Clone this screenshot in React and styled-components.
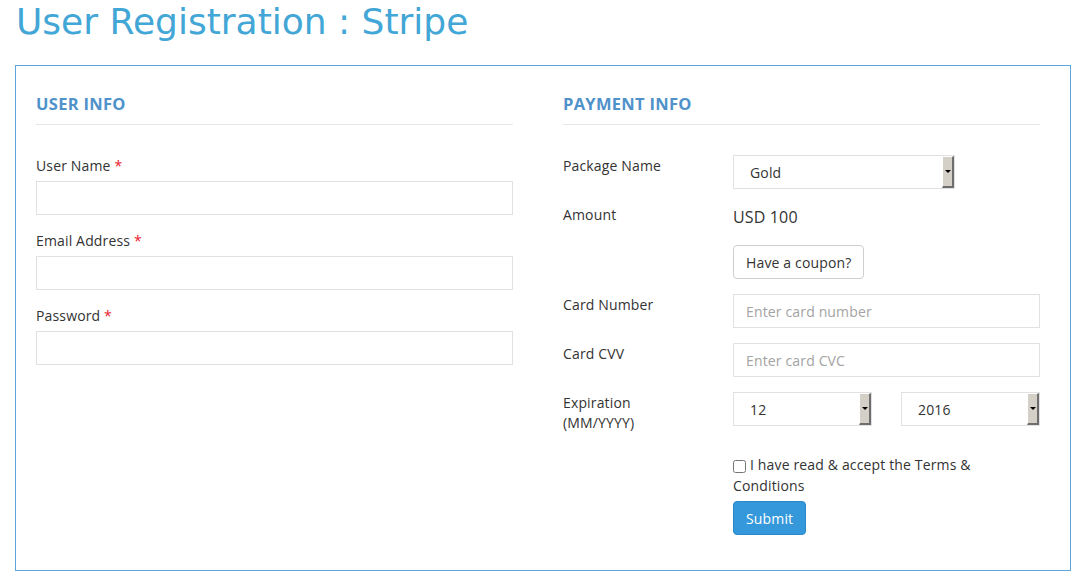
import React from 'react';
import styled, { createGlobalStyle } from 'styled-components';

const GlobalStyle = createGlobalStyle`
    body {
        margin: 0;
        background: #fff;
        font-family: "Open Sans", "Liberation Sans", sans-serif;
        font-size: 14px;
        letter-spacing: 0.15px;
        color: #333;
    }
`;

const Page = styled.div`
    padding: 0 12px 0 15px;
`;

const Title = styled.h1`
    margin: 0;
    height: 65px;
    padding-left: 1px;
    font-family: "DejaVu Sans", "Liberation Sans", sans-serif;
    font-weight: 400;
    font-size: 36px;
    line-height: 44px;
    letter-spacing: 0;
    color: #42a6d6;
`;

const Box = styled.div`
    border: 1px solid #5ba7dd;
    display: grid;
    grid-template-columns: 1fr 1fr;
    column-gap: 50px;
    padding: 27px 30px 35px 20px;
`;

const Column = styled.div`
    display: flex;
    flex-direction: column;
`;

const Heading = styled.h3`
    margin: 0;
    padding-bottom: 9px;
    border-bottom: 1px solid #e6e6e6;
    font-size: 16.5px;
    line-height: 22px;
    font-weight: 700;
    color: #4f92ca;
    letter-spacing: 0.3px;
`;

const Field = styled.div`
    display: flex;
    flex-direction: column;
    gap: 5px;
    margin-top: ${p => (p.first ? '31px' : '16px')};
`;

const Label = styled.label`
    line-height: 20px;
    color: #333;
`;

const Required = styled.span`
    color: #e8202a;
`;

const Input = styled.input`
    box-sizing: border-box;
    width: 100%;
    height: 34px;
    border: 1px solid #e1e1e1;
    border-radius: 0;
    padding: 0 12px;
    font-family: inherit;
    font-size: 14px;
    letter-spacing: inherit;
    color: #333;
    outline: none;
    &::placeholder {
        color: #a3a3a3;
    }
`;

const Row = styled.div`
    display: grid;
    grid-template-columns: 170px 1fr;
    margin-top: ${p => p.gap || '15px'};
`;

const RowLabel = styled.div`
    padding-top: 1px;
    line-height: 20px;
`;

const Control = styled.div`
    display: flex;
    flex-direction: column;
    align-items: ${p => (p.stretch ? 'stretch' : 'flex-start')};
`;

const SelectBox = styled.div`
    position: relative;
    box-sizing: border-box;
    width: ${p => p.width || '100%'};
    height: 34px;
    border: 1px solid #e1e1e1;
    display: flex;
    align-items: center;
    padding-left: 16px;
    font-size: 14px;
    color: #333;
    background: #fff;
`;

const SelectArrow = styled.span`
    position: absolute;
    top: 0;
    right: 0;
    bottom: 0;
    width: 12px;
    box-sizing: border-box;
    background: #d4d0c8;
    border-top: 1px solid #fff;
    border-left: 1px solid #fff;
    border-right: 2px solid #6e6e6e;
    border-bottom: 2px solid #6e6e6e;
    display: flex;
    align-items: center;
    justify-content: center;
    &::after {
        content: '';
        border-left: 3px solid transparent;
        border-right: 3px solid transparent;
        border-top: 3px solid #000;
    }
`;

const Amount = styled.div`
    font-size: 16px;
    line-height: 26px;
    color: #333;
`;

const Button = styled.button`
    box-sizing: border-box;
    height: 34px;
    padding: 0 12px;
    border-radius: 4px;
    font-family: inherit;
    font-size: 14px;
    letter-spacing: inherit;
    cursor: pointer;
    border: 1px solid ${p => (p.primary ? '#2a88c9' : '#cfcfcf')};
    background: ${p => (p.primary ? '#3498db' : '#fff')};
    color: ${p => (p.primary ? '#fff' : '#333')};
    margin-top: ${p => (p.primary ? '5px' : '0')};
`;

const ExpiryGrid = styled.div`
    display: grid;
    grid-template-columns: 139px 139px;
    justify-content: space-between;
`;

const Terms = styled.label`
    line-height: 21px;
    padding-right: 6px;
    color: #333;
`;

const Check = styled.input`
    width: 13px;
    height: 13px;
    margin: 0 4px 0 0;
    vertical-align: middle;
`;

function Select({ value, width }) {
    return (
        <SelectBox width={width}>
            {value}
            <SelectArrow />
        </SelectBox>
    );
}

export default function App() {
    return (
        <Page>
            <GlobalStyle />
            <Title>User Registration : Stripe</Title>
            <Box>
                <Column>
                    <Heading>USER INFO</Heading>
                    <Field first>
                        <Label>User Name <Required>*</Required></Label>
                        <Input type="text" />
                    </Field>
                    <Field>
                        <Label>Email Address <Required>*</Required></Label>
                        <Input type="text" />
                    </Field>
                    <Field>
                        <Label>Password <Required>*</Required></Label>
                        <Input type="password" />
                    </Field>
                </Column>
                <Column>
                    <Heading>PAYMENT INFO</Heading>
                    <Row gap="30px">
                        <RowLabel>Package Name</RowLabel>
                        <Control>
                            <Select value="Gold" width="222px" />
                        </Control>
                    </Row>
                    <Row>
                        <RowLabel>Amount</RowLabel>
                        <Control>
                            <Amount>USD 100</Amount>
                        </Control>
                    </Row>
                    <Row>
                        <RowLabel />
                        <Control>
                            <Button>Have a coupon?</Button>
                        </Control>
                    </Row>
                    <Row>
                        <RowLabel>Card Number</RowLabel>
                        <Control stretch>
                            <Input placeholder="Enter card number" />
                        </Control>
                    </Row>
                    <Row>
                        <RowLabel>Card CVV</RowLabel>
                        <Control stretch>
                            <Input placeholder="Enter card CVC" />
                        </Control>
                    </Row>
                    <Row>
                        <RowLabel>Expiration<br />(MM/YYYY)</RowLabel>
                        <Control stretch>
                            <ExpiryGrid>
                                <Select value="12" />
                                <Select value="2016" />
                            </ExpiryGrid>
                        </Control>
                    </Row>
                    <Row gap="21px">
                        <RowLabel />
                        <Control>
                            <Terms>
                                <Check type="checkbox" />I have read &amp; accept the Terms &amp; Conditions
                            </Terms>
                            <Button primary>Submit</Button>
                        </Control>
                    </Row>
                </Column>
            </Box>
        </Page>
    );
}
